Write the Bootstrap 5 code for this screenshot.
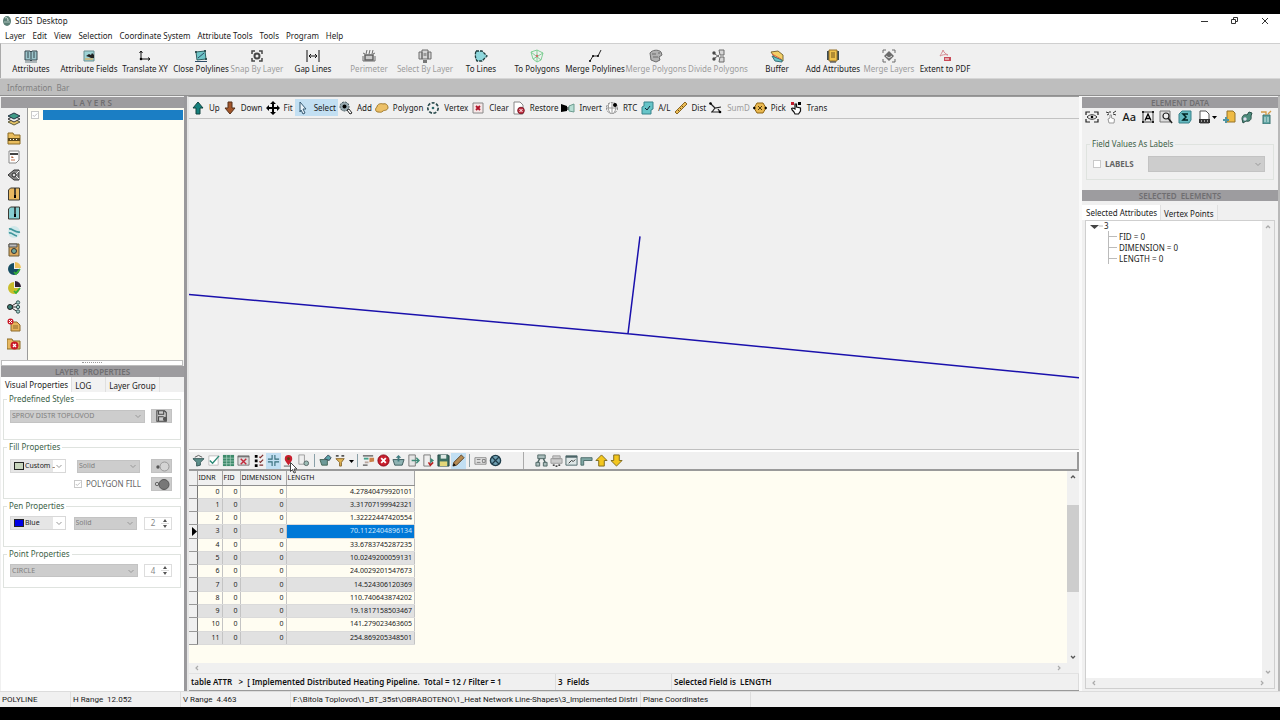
<!DOCTYPE html>
<html lang="en">
<head>
<meta charset="utf-8">
<meta name="viewport" content="width=device-width, initial-scale=1">
<title>SGIS Desktop</title>
<link href="https://cdn.jsdelivr.net/npm/bootstrap@5.3.0/dist/css/bootstrap.min.css" rel="stylesheet">
<style>
:root{--face:#f0f0f0;--cream:#fffdf2;--bar:#9d9c9f;--green:#3c5f47}
body{font:8px/10px "Noto Sans","Open Sans",sans-serif;color:#1b1b1b;background:var(--face);min-height:100vh}
svg{display:block;flex:none}
.ic{width:14px;height:14px}
button,select,input{font:inherit;color:inherit}
.letterbox{background:#000;height:14px}
.letterbox.foot{height:13px}
.titlebar{height:14px;background:#fff}
.titlebar button{width:30px;border:0;background:none;padding:0}
.titlebar span{white-space:pre;padding-left:2px}
.menubar{height:15px;background:#fff;padding-left:5px;gap:7px}
.menubar a{color:inherit;text-decoration:none}
.tool{border:0;background:none;padding:0;color:inherit}
.tool:disabled{color:#9c9c9c}
.ribbon{height:35px;border-top:1px solid #cfcfcf;border-left:1px solid #aaa;padding-top:5px}
.ribbon .tool{width:56px;display:flex;flex-direction:column;align-items:center;gap:1px;white-space:nowrap}
.ribbon .w-wide{width:60px}
.ribbon .w-xwide{width:62px}
.ribbon .tool:disabled svg{filter:grayscale(1);opacity:.7}
.infobar{height:18px;background:#bebebe;border-top:1px solid #d6d6d6;border-bottom:1px solid #909090;color:#808080;padding:4px 7px 0;white-space:pre}
.leftcol{width:187px;border-right:3px solid #9a999c;padding:1px 0 0 1px}
.rightcol{width:201px;border-left:3px solid #fafafa;border-right:2px solid #b9b9b9;padding-top:1px}
.caption{background:var(--bar);color:#6f6e71;height:11px;line-height:11px;text-align:center;font-weight:600;white-space:pre}
.strip{width:27px;border-right:1px solid #9a9a9a;padding:4px 0 9px;height:252px}
.treebox{background:var(--cream)}
.layer-row{height:13px;padding:1px 1px 1px 3px}
.layer-row .pick{height:10px;background:#1b7ec4}
.chk{appearance:none;width:8px;height:8px;margin:0;border:1px solid #c9c9c9;background:#fff}
.chk:checked{background:#fff url("data:image/svg+xml,%3Csvg xmlns='http://www.w3.org/2000/svg' viewBox='0 0 8 8'%3E%3Cpath d='M1 4l2 2 4-4' fill='none' stroke='%23aaa'/%3E%3C/svg%3E")}
.grip{height:6px;background:#fff;border:1px solid #bdbdbd;margin-right:1px}
.grip i{width:20px;height:2px;border-top:1px dotted #999;display:block}
.tabrow{height:15px}
.tabrow .tab{border:0;background:#f2f2f2;border-right:1px solid #e0e0e0;padding:2px 3px 0;line-height:11px}
.tabrow .tab.active{background:#fff;padding:0 3px 0 4px}
.tabrow .tab.roomy{padding-right:14px}
.props{background:#fff;padding:2px 3px 0 2px}
.grp{border:1px solid #dfe3df;margin:0 0 2px;padding:0 8px 0 6px;min-width:0}
.grp legend{float:none;width:auto;font-size:8px;line-height:10px;margin:0 0 0 -3px;padding:0 2px;color:var(--green)}
.r-ctl{padding-top:5px}
.r-low{padding-top:7px}
.polyfill{color:#666;padding-left:64px}
.sel{appearance:none;border:1px solid #c3c3c3;background:#cdcdcd url("data:image/svg+xml,%3Csvg xmlns='http://www.w3.org/2000/svg' viewBox='0 0 8 8'%3E%3Cpath d='M1.5 3l2.500 2.500L6.500 3' fill='none' stroke='%23999'/%3E%3C/svg%3E") no-repeat right 2px center/8px 8px;height:13px;padding:0 10px 0 1px;line-height:10px;font-size:7px;color:#808080;opacity:1;border-radius:0}
.sel.live{background-color:transparent;border:0;color:#222;font-size:7px;flex:1;min-width:0}
.swbox{width:56px;border:1px solid #d8d8d8;height:14px;background:linear-gradient(90deg,#e6e6e6 42px,#fff 42px);padding-left:3px}
.sw{width:10px;height:8px;border:1px solid #222}
.w63{width:63px}.w128{width:128px}.w134{width:135px}
.labelsel{width:117px;height:16px}
.sqbtn{width:21px;height:14px;background:#ccc;border:1px solid #c2c2c2;padding:0;display:flex;align-items:center;justify-content:center}
.spin{width:28px;height:13px;border:1px solid #ddd;background:#fff}
.spin input{width:16px;border:0;text-align:center;padding:0;background:none;color:#888}
.center-col{min-width:0;border-top:1px solid #9a9a9a;border-left:2px solid #e6e6e6}
.cmdbar{height:22px;border-bottom:1px solid #c2c2c2;padding:2px 0 2px 1px}
.cmdbar .tool{display:flex;align-items:center;gap:4px;padding:0 2px 0 1px;white-space:nowrap;height:17px}
.cmdbar .on,.gridbar .on{background:#c2dff2}
.map{flex:1;min-height:0}
.gridbar{height:21px;border-top:2px solid #fff;border-bottom:2px solid #9a9a9a;padding-left:2px;box-shadow:0 -1px #c0c0c0,inset -2px 0 #9a9a9a}
.gridbar .tool{width:15px;height:16px;display:flex;align-items:center;justify-content:center}
.gridbar .ic{width:13px;height:13px}
.vr1{width:1px;height:13px;background:#8aa0a8;margin:0 3px}
.vr1.far{margin:0 10px 0 20px;height:17px;background:#aaa}
.gridwrap{background:var(--cream);height:192px}
.attrs{width:226px;height:174px;border-collapse:collapse;font-size:7px;line-height:8px;table-layout:fixed}
.attrs th,.attrs td{padding:0 2px;border-right:1px solid #c4c4c4;border-bottom:1px solid #dadada;text-align:right;white-space:nowrap}
.attrs thead th{height:14px;background:var(--face);text-align:left;border-bottom:1px solid #8f8f8f;border-right-color:#a5a5a5;font-weight:400;color:#111;padding:0 1px}
.attrs tbody tr{height:13px}
.attrs tbody th{background:var(--face);border-bottom-color:#999;border-right-color:#777;padding:0}
.attrs tbody tr:nth-child(even) td{background:#e1e1e1}
.attrs tbody tr td.cur{background:#0078d7;color:#cfe8ff}
.vbar{width:12px;background:var(--face);color:#555}
.thumb{height:87px;background:#cdcdcd;margin-top:22px}
.hbar{height:10px;color:#aaa}
.gstat{height:18px;border-top:1px solid #e2e2e2;border-bottom:1px solid #9a9a9a;font-weight:600;white-space:pre;line-height:16px;color:#111}
.gstat span{border-right:1px solid #dcdcdc;padding-left:2px}
.c-total{flex:0 0 367px}.c-fields{flex:0 0 116px}
.statusbar{height:16px;border-top:1px solid #dcdcdc;white-space:pre;line-height:15px;font-family:Roboto,"Noto Sans",sans-serif}
.statusbar span{border-right:1px solid #ddd;padding-left:2px;flex:0 0 110px}
.statusbar .s-first{flex-basis:71px}.statusbar .s-path{flex-basis:350px}
.iconrow{padding:2px 5px 0 3px}
.aa{font-size:11px;line-height:12px;font-weight:500}
.labelgrp{height:41px;margin:15px 4px 2px}
.tree{background:#fff;border:1px solid #cfcfcf;margin:0 3px 2px}
.tree ul{list-style:none;margin:0 0 0 22px;padding:0;border-left:1px solid #bbb}
.tree li{height:11px;line-height:11px;padding-left:10px;background:linear-gradient(#bbb,#bbb) 0 5px/8px 1px no-repeat}
.cursor{position:absolute;left:101px;top:10px}
</style>
</head>
<body class="d-flex flex-column">
<svg width="0" height="0" class="position-absolute" aria-hidden="true">
<defs>
<symbol id="book" viewBox="0 0 14 14"><path d="M1 2h5l1 1 1-1h5v9H8l-1 1-1-1H1z" fill="#9cc5cb" stroke="#37474f"/><path d="M7 3v8M3 4h2M3 6h2M3 8h2M9 4h2M9 6h2M9 8h2" stroke="#37474f"/><path d="M1 13h12" stroke="#6b7d82"/></symbol>
<symbol id="fields" viewBox="0 0 14 14"><path d="M2 2h10v10H2z" fill="#9ed3d6" stroke="#6a8f90"/><path d="M4 7l3-2 2 1 1-2 2 2v3H9L7 8z" fill="#222"/><path d="M3 10h8" stroke="#e8a33d"/></symbol>
<symbol id="axes" viewBox="0 0 14 14"><path d="M3 2v8h9M1.500 4L3 2l1.500 2M10 8.500l2 1.500-2 1.500" fill="none" stroke="#111"/><circle cx="3" cy="10" r="1.300"/></symbol>
<symbol id="poly" viewBox="0 0 14 14"><path d="M2 3l9-1 1 8-9 1z" fill="#6fc6c8" stroke="#2f5f60"/><path d="M4 9l6-5M1 12.500h12" stroke="#2b4a66"/><path d="M1 2h2v2H1zM10 1h2v2h-2zM11 9h2v2h-2z" fill="#355"/></symbol>
<symbol id="snap" viewBox="0 0 14 14"><path d="M2 5V2h3M9 2h3v3M12 9v3H9M5 12H2V9" fill="none" stroke="#000" stroke-width="1.500"/><circle cx="7" cy="7" r="2.500" fill="none" stroke="#000" stroke-width="2"/></symbol>
<symbol id="gap" viewBox="0 0 14 14"><path d="M1 1v12M13 1v12M3 7h8M5 5L3 7l2 2M9 5l2 2-2 2" fill="none" stroke="#111"/></symbol>
<symbol id="perim" viewBox="0 0 14 14"><path d="M3 6h8v5H3z" fill="#bbb" stroke="#222" stroke-width="1.500"/><path d="M4 5l1-4M7 5l1-4M10 5l1-4M1 4l2 1M13 4l-2 1M1 7v5h12V7" stroke="#333" fill="none"/></symbol>
<symbol id="selby" viewBox="0 0 14 14"><path d="M4 1h6v9H4zM1 3h3v7H1zM10 3h3v7h-3z" fill="#ccc" stroke="#333"/><path d="M5 11h4v3H5z" fill="#444"/><path d="M5.500 4h3v3h-3z" fill="#777"/></symbol>
<symbol id="tolines" viewBox="0 0 14 14"><path d="M2 2h6l5 5-5 5H3C1 9 1 5 2 2z" fill="#8ed7dc" stroke="#1d3b3c" stroke-width="1.300" stroke-dasharray="3 1"/></symbol>
<symbol id="topoly" viewBox="0 0 14 14"><path d="M1 3l6-2 6 3-2 7-4 2-4-3zM7 1v12M1 3l10 8M13 4L3 10" fill="none" stroke="#7fcf94"/><circle cx="7" cy="7" r="1.200" fill="#d06a6a"/></symbol>
<symbol id="mline" viewBox="0 0 14 14"><path d="M2 12l3-5 5 0 3-6" fill="none" stroke="#222"/><circle cx="2" cy="12" r="1"/><circle cx="5" cy="7" r="1"/><circle cx="10" cy="7" r="1"/></symbol>
<symbol id="mpoly" viewBox="0 0 14 14"><path d="M1 4c2-3 8-4 11-1l1 3-3 2 1 3-4 2-5-2z" fill="#999" stroke="#333"/><path d="M3 5h4M4 8h5M9 4h2" stroke="#333"/></symbol>
<symbol id="divide" viewBox="0 0 14 14"><circle cx="3" cy="4" r="1.700"/><circle cx="3" cy="10" r="1.700"/><path d="M4 5l4 3M4 9l4-3" stroke="#222"/><path d="M8 1h5v5H9zM9 8h4v5H8z" fill="#ccc" stroke="#333"/></symbol>
<symbol id="buffer" viewBox="0 0 14 14"><path d="M1 3l7-1 5 4v6l-8-3z" fill="#f3cf66" stroke="#7c6a35"/><path d="M2 7l10 4v2L5 12z" fill="#6cc5c8" stroke="#37717a"/><path d="M2 5l9 5" stroke="#e0604a"/></symbol>
<symbol id="addattr" viewBox="0 0 14 14"><path d="M1 2h12v9H1z" fill="#3b4c54"/><path d="M3 1h8v11H3z" fill="#f0c34d" stroke="#96732a"/><path d="M5 4h4M5 6h4M5 8h4" stroke="#70541a"/><path d="M4 13h6" stroke="#222"/></symbol>
<symbol id="mlayer" viewBox="0 0 14 14"><path d="M1 4V1h3M10 1h3v3M13 10v3h-3M4 13H1v-3" fill="none" stroke="#333"/><path d="M7 2l5 5-5 5-5-5z" fill="#333"/><path d="M4 7l3 2 3-2" fill="none" stroke="#ddd"/></symbol>
<symbol id="pdf" viewBox="0 0 14 14"><path d="M5 1c-1 3-2 4-3 6M5 1c1 3 3 4 5 5-3-1-6 0-8 1" fill="none" stroke="#d58a92"/><path d="M6 8h7v4H6z" fill="#c94a58"/><path d="M8 9v2M10 9v2" stroke="#fff"/></symbol>
<symbol id="up" viewBox="0 0 14 14"><path d="M7 1l5 6H9v6H5V7H2z" fill="#15807c" stroke="#124440"/></symbol>
<symbol id="down" viewBox="0 0 14 14"><path d="M7 13l5-6H9V1H5v6H2z" fill="#a4572b" stroke="#54301a"/></symbol>
<symbol id="fit" viewBox="0 0 14 14"><path d="M7 0l3 3H8v3h3V4l3 3-3 3V8H8v3h2l-3 3-3-3h2V8H3v2L0 7l3-3v2h3V3H4z"/></symbol>
<symbol id="arrow" viewBox="0 0 14 14"><path d="M4 1l6 7H7l2 4-2 1-2-4-1 2z" fill="#eaf4fb" stroke="#375a72"/></symbol>
<symbol id="addp" viewBox="0 0 14 14"><circle cx="5.500" cy="5.500" r="4.500" fill="#97a9af" stroke="#44565c" stroke-dasharray="2 1"/><circle cx="5.500" cy="5.500" r="2"/><path d="M8 9l2-1 3 4-2 1z" fill="#fff" stroke="#222"/></symbol>
<symbol id="cloud" viewBox="0 0 14 14"><path d="M3 11C0 11 0 7 2 6c0-3 4-4 6-3 3-1 5 1 5 4-1 3-4 2-5 3-2 2-3 1-5 1z" fill="#ecc067" stroke="#a17a2c"/></symbol>
<symbol id="vertex" viewBox="0 0 14 14"><circle cx="7" cy="7" r="5.200" fill="none" stroke="#2d4d4f" stroke-width="1.700" stroke-dasharray="3 1.500"/><circle cx="7" cy="7" r="1.300" fill="#2d6a6c"/></symbol>
<symbol id="clear" viewBox="0 0 14 14"><path d="M2 2h10v10H2z" fill="#f6e7e7" stroke="#888"/><path d="M5 5l4 4M9 5l-4 4" stroke="#b01228" stroke-width="1.800"/></symbol>
<symbol id="restore" viewBox="0 0 14 14"><path d="M2 1h6l3 3v9H2z" fill="#fff" stroke="#888"/><circle cx="9" cy="9.500" r="3.300" fill="#c22f42" stroke="#7d1d29"/><path d="M7.500 8l3 3M10.500 8l-3 3" stroke="#fff"/></symbol>
<symbol id="invert" viewBox="0 0 14 14"><path d="M0 3l6 2v5l-6 1z"/><path d="M6 6h2v3H6z" fill="#666"/><path d="M8 5l5-2v8l-5-1z" fill="#b8ded4" stroke="#6b9b8f"/></symbol>
<symbol id="globe" viewBox="0 0 14 14"><circle cx="7" cy="7" r="5.500" fill="#fff" stroke="#777" stroke-dasharray="2 1"/><path d="M7 1v12M1 7h12M4 2c-1 4-1 7 1 10M10 2c1 4 1 7-1 10" fill="none" stroke="#999"/><circle cx="10" cy="4" r="2"/></symbol>
<symbol id="al" viewBox="0 0 14 14"><path d="M4 1h9v7l-2 1v4H2V6l2-1z" fill="#66c4c8" stroke="#37828a"/><path d="M5 7l2 2 3-4" fill="none" stroke="#123"/></symbol>
<symbol id="ruler" viewBox="0 0 14 14"><path d="M1 11L11 1l2 2L3 13z" fill="#e9bb55" stroke="#8a6725"/><path d="M4 9l1 1M6 7l1 1M8 5l1 1" stroke="#6b4e17"/></symbol>
<symbol id="sumd" viewBox="0 0 14 14"><path d="M1 2l5 5 6-1M2 11h9l-2-3M6 7l-3 4" fill="none" stroke="#222" stroke-width="1.200"/><circle cx="1.500" cy="2.500" r="1.300"/><circle cx="11" cy="11" r="1.300"/></symbol>
<symbol id="pickp" viewBox="0 0 14 14"><path d="M4 2h6l3 5-3 5H4L1 7z" fill="#eab84f" stroke="#8d6415"/><path d="M5 5l4 4M9 5L5 9" stroke="#513a0c"/><circle cx="1.300" cy="7" r="1.200"/><circle cx="12.700" cy="7" r="1.200"/></symbol>
<symbol id="trans" viewBox="0 0 14 14"><path d="M5 11C2 8 2 7 4 7l2 1V3h1.500v3l4 1v3l-2 3H6z" fill="#fff" stroke="#111" stroke-width="1.200"/><path d="M2 1h3v3H2z" fill="#c21a2b"/><path d="M9 1h3v3H9z"/></symbol>
<symbol id="layers" viewBox="0 0 14 14"><path d="M1 10l6-3 6 3-6 3z" fill="#e7c567" stroke="#5c5b3c"/><path d="M1 7l6-3 6 3-6 3z" fill="#eee" stroke="#333"/><path d="M1 4l6-3 6 3-6 3z" fill="#3f9a86" stroke="#234"/></symbol>
<symbol id="folder" viewBox="0 0 14 14"><path d="M1 2h5l1 2h6v9H1z" fill="#e9bd5e" stroke="#8a6a25"/><path d="M1 7h12v3H1z" fill="#5d4a1c"/><path d="M3 8.500h1M6 8.500h1M9 8.500h1" stroke="#fff"/></symbol>
<symbol id="dxf" viewBox="0 0 14 14"><path d="M2 1h10v9l-3 3H2z" fill="#fff" stroke="#888"/><path d="M3 3h8v2H3z" fill="#444"/><path d="M4 7h2v1M4 10h4" stroke="#c57048"/></symbol>
<symbol id="share" viewBox="0 0 14 14"><path d="M1 7l6-5h5v10H7z" fill="#888" stroke="#333"/><circle cx="7" cy="7" r="2" fill="#ddd" stroke="#222"/><path d="M9 6l3-3M9 8l3 3" stroke="#eee"/></symbol>
<symbol id="zip" viewBox="0 0 14 14"><path d="M1.500 3l2-2h9v12h-11z" fill="var(--f,#e8b860)" stroke="#3d3b33"/><path d="M8 1v7" stroke="#222" stroke-width="1.500"/><path d="M7 8h2v3H7z"/></symbol>
<symbol id="swirl" viewBox="0 0 14 14"><circle cx="7" cy="7" r="6" fill="#cfe8ea"/><path d="M2 4c3-1 6 4 11 3M2 8c3-1 5 3 8 3" fill="none" stroke="#3f959b" stroke-width="1.700"/></symbol>
<symbol id="docpin" viewBox="0 0 14 14"><path d="M2 1h10v12H2z" fill="#dba85a" stroke="#6b5a38"/><path d="M2 1h8v3H2z" fill="#bbb" stroke="#555"/><circle cx="7" cy="8" r="2.500" fill="#6fa79c" stroke="#333"/></symbol>
<symbol id="pie" viewBox="0 0 14 14"><path d="M7 1a6 6 0 1 0 6 6H7z" fill="var(--f,#174e63)"/><path d="M8 0a6 6 0 0 1 6 6H8z" fill="var(--g,#eec25e)"/><path d="M7 10l2 2 4-5" fill="none" stroke="#36b336" stroke-width="1.700"/></symbol>
<symbol id="nodes" viewBox="0 0 14 14"><path d="M3 7l8-5M3 7h8M3 7l8 5" stroke="#333"/><circle cx="3" cy="7" r="2.500" fill="#3a7f76" stroke="#222"/><g fill="#a5cfca" stroke="#355"><circle cx="11" cy="2.500" r="1.700"/><circle cx="11" cy="7" r="1.700"/><circle cx="11" cy="11.500" r="1.700"/></g></symbol>
<symbol id="docx" viewBox="0 0 14 14"><path d="M4 4h6l3 3v6H4z" fill="#e6b35a" stroke="#8d6b2d"/><path d="M6 8h5M6 10h5" stroke="#8d6b2d"/><circle cx="3.500" cy="3.500" r="3" fill="#c91a28"/><path d="M2 2l3 3M5 2L2 5" stroke="#fff"/></symbol>
<symbol id="foldx" viewBox="0 0 14 14"><path d="M0 2h5l1 2h7v8H0z" fill="#e8b860" stroke="#8a6a25"/><circle cx="7.500" cy="8.500" r="4" fill="#c91a28"/><path d="M6 7l3 3M9 7l-3 3" stroke="#fff" stroke-width="1.300"/></symbol>
<symbol id="funnel" viewBox="0 0 14 14"><path d="M1 5h12L9 9v3l-4 1V9z" fill="#5c8f8a" stroke="#355"/><path d="M3 3.500l4-2 4 2" fill="none" stroke="#555"/></symbol>
<symbol id="check" viewBox="0 0 14 14"><path d="M2 2h10v10H2z" fill="#fff" stroke="#bbb"/><path d="M3 7l3 3 7-8" fill="none" stroke="#2b8a76" stroke-width="1.500"/></symbol>
<symbol id="grid" viewBox="0 0 14 14"><path d="M1 1h12v12H1z" fill="#3d8a6a"/><path d="M1 4.500h12M1 7.500h12M1 10.500h12M5 1v12M9 1v12" stroke="#b5d8c9" stroke-width=".7"/></symbol>
<symbol id="tblx" viewBox="0 0 14 14"><path d="M1 2h12v10H1z" fill="#ddd" stroke="#777"/><path d="M1 3h12" stroke="#555"/><path d="M4 5l6 6M10 5l-6 6" stroke="#c2293a" stroke-width="1.500"/></symbol>
<symbol id="list" viewBox="0 0 14 14"><path d="M3 1h3v3H3zM3 6h3v3H3zM3 11h3v3H3z"/><path d="M8 3l1 1 3-3M8 8l1 1 3-3M8 12h4" fill="none" stroke="#7b2c2c" stroke-width="1.300"/></symbol>
<symbol id="cross" viewBox="0 0 14 14"><path d="M5.500 1v4.500H1M8.500 1v4.500H13M5.500 13V8.500H1M8.500 13V8.500H13" fill="none" stroke="#356e7a" stroke-width="1.200"/></symbol>
<symbol id="pin" viewBox="0 0 14 14"><path d="M7 12C4 8 3 7 3 5a4 4 0 0 1 8 0c0 2-1 3-4 7z" fill="#c81e2d"/><circle cx="7" cy="5" r="1.500" fill="#541"/><path d="M2 13h10" stroke="#555"/></symbol>
<symbol id="docg" viewBox="0 0 14 14"><path d="M2 1h6v10H2z" fill="#eee" stroke="#999"/><circle cx="10" cy="10" r="2.500" fill="#9dbdb5" stroke="#566"/></symbol>
<symbol id="export" viewBox="0 0 14 14"><path d="M1 6h8v6H3z" fill="#6e9a98" stroke="#465"/><path d="M6 5l4-4 3 3-2 3z" fill="#5aa3a8" stroke="#345"/></symbol>
<symbol id="filt2" viewBox="0 0 14 14"><path d="M2 5h9L8 9v4H6V9z" fill="#e2b553" stroke="#87652a"/><path d="M2 1h3v2H2zM8 1h3v2H8z" fill="#555"/></symbol>
<symbol id="edit2" viewBox="0 0 14 14"><path d="M1 2h11M1 12h5" stroke="#555" stroke-width="1.300"/><path d="M8 4h5v4L8 9z" fill="#c9824a"/><path d="M2 4h5v2H2z" fill="#44a089"/><path d="M3 8h4v2H3z" fill="#b9a7a0"/></symbol>
<symbol id="redx" viewBox="0 0 14 14"><circle cx="7" cy="7" r="6" fill="#c81e2d" stroke="#801"/><path d="M4.500 4.500l5 5M9.500 4.500l-5 5" stroke="#fff" stroke-width="2"/></symbol>
<symbol id="upl" viewBox="0 0 14 14"><path d="M1 6h12l-2 6H3z" fill="#8fb3b3" stroke="#3b5b5d"/><path d="M7 1l3 3H8v4H6V4H4z" fill="#3f7c80"/></symbol>
<symbol id="docout" viewBox="0 0 14 14"><path d="M2 1h7v12H2z" fill="#e5e5e5" stroke="#777"/><path d="M5 7h7M10 4l3 3-3 3" fill="none" stroke="#3f8a78" stroke-width="1.500"/></symbol>
<symbol id="docred" viewBox="0 0 14 14"><path d="M2 1h7v12H2z" fill="#eee" stroke="#777"/><path d="M9 4l4 3-4 3z" fill="#3f8a78"/><path d="M7 9l2 3 3-3" fill="none" stroke="#b22" stroke-width="1.700"/></symbol>
<symbol id="save" viewBox="0 0 14 14"><path d="M1 1h11l1 1v11H1z" fill="#3c6f63" stroke="#244"/><path d="M4 1h6v4H4z" fill="#dfe8e4"/><path d="M3 8h8v5H3z" fill="#e3d77a"/></symbol>
<symbol id="pencil" viewBox="0 0 14 14"><path d="M1 13l1-4 8-8 3 3-8 8z" fill="#b58a52" stroke="#55432b"/><path d="M1 13l1-3 2 2z"/></symbol>
<symbol id="kbd" viewBox="0 0 14 14"><path d="M1 4h12v7H1z" fill="#e5e5e5" stroke="#888"/><path d="M3 6h4M3 9h4M9 6v3h3V6z" stroke="#777" fill="none"/></symbol>
<symbol id="circx" viewBox="0 0 14 14"><circle cx="7" cy="7" r="5.500" fill="#6f9fb2" stroke="#1f3d4a" stroke-width="1.500"/><path d="M3 3l8 8M11 3l-8 8" stroke="#1f3d4a" stroke-width="1.300"/></symbol>
<symbol id="net" viewBox="0 0 14 14"><path d="M3 1h8v4H3zM1 9h4v4H1zM9 9h4v4H9z" fill="#a9bcbb" stroke="#4e6664"/><path d="M5 5l-2 4M9 5l2 4" stroke="#4e6664" stroke-width="1.500"/></symbol>
<symbol id="print" viewBox="0 0 14 14"><path d="M3 2h8v3H3zM1 5h12v5H1z" fill="#ccc" stroke="#999"/><path d="M3 12h2M6 13h2M9 12h2" stroke="#111" stroke-width="1.500"/></symbol>
<symbol id="win" viewBox="0 0 14 14"><path d="M1 2h12v10H1z" fill="#dfe7e7" stroke="#4b6467"/><path d="M1 3h12" stroke="#4b6467" stroke-width="2"/><path d="M4 10l3-3 2 1 2-2" fill="none" stroke="#333"/></symbol>
<symbol id="tee" viewBox="0 0 14 14"><path d="M1 4h12v3H4v5H1z" fill="#7fa7a4" stroke="#4b6b69"/></symbol>
<symbol id="yup" viewBox="0 0 14 14"><path d="M7 1l6 6h-3v6H4V7H1z" fill="#f3c61d" stroke="#7b671a"/></symbol>
<symbol id="ydown" viewBox="0 0 14 14"><path d="M7 13l6-6h-3V1H4v6H1z" fill="#f3c61d" stroke="#7b671a"/></symbol>
<symbol id="eye" viewBox="0 0 14 14"><path d="M1 5V2h4M9 2h4v3M13 9v3H9M5 12H1V9" fill="none" stroke="#222" stroke-width="1.200"/><path d="M2 7c3-3 7-3 10 0-3 3-7 3-10 0z" fill="none" stroke="#333"/><circle cx="7" cy="7" r="1.300"/></symbol>
<symbol id="hand" viewBox="0 0 14 14"><path d="M5 13l-1-4 2-1V5h1.500v3l3 1-.5 4z" fill="#fff" stroke="#999"/><path d="M2 2l3 1M6 1v2M12 1l-3 2M3 5l2-1M9 4l3 1" stroke="#333"/></symbol>
<symbol id="boxa" viewBox="0 0 14 14"><path d="M2 2h10v10H2z" fill="none" stroke="#444"/><path d="M1 1h2v2H1zM11 1h2v2h-2zM1 11h2v2H1zM11 11h2v2h-2z" fill="#222"/><path d="M4 10.500L7 4l3 6.500M5 8.500h4" fill="none" stroke="#000" stroke-width="1.300"/></symbol>
<symbol id="find" viewBox="0 0 14 14"><path d="M1 1h10v11H1z" fill="#ddd" stroke="#777"/><circle cx="7" cy="6" r="3" fill="#eee" stroke="#222" stroke-width="1.200"/><path d="M9 8l4 5" stroke="#222" stroke-width="1.700"/></symbol>
<symbol id="sigma" viewBox="0 0 14 14"><path d="M4 1h9v9l-2 3H1V4z" fill="#65b9c0" stroke="#39818a"/><path d="M10 4H5l3 3-3 3h5" fill="none" stroke="#022" stroke-width="1.500"/></symbol>
<symbol id="csv" viewBox="0 0 14 14"><path d="M3 1h6l3 3v9H3z" fill="#fff" stroke="#555"/><path d="M2 9h11v4H2z" fill="#333"/><path d="M4 11h1M7 11h1M10 11h1" stroke="#fff"/></symbol>
<symbol id="ydoc" viewBox="0 0 14 14"><path d="M5 1h6l2 2v9H5z" fill="#efbb45" stroke="#93722a"/><path d="M4 7v6M1 10h6" stroke="#5095a3" stroke-width="2"/></symbol>
<symbol id="plug" viewBox="0 0 14 14"><path d="M2 9c0-4 3-5 5-4l2-3 3 1-1 3c1 4-2 6-5 5l-3 2z" fill="#4e8d7d" stroke="#284f48"/><circle cx="5" cy="9" r="1.700" fill="#dde"/></symbol>
<symbol id="trash" viewBox="0 0 14 14"><path d="M4 5h7v9H4z" fill="#61a6a5" stroke="#39706f"/><path d="M2 2h5v3M9 4l3-3" fill="none" stroke="#d29a46" stroke-width="1.300"/><path d="M6 7v5M9 7v5" stroke="#cfe5e3"/></symbol>
<symbol id="cl" viewBox="0 0 8 8"><path d="M5 2L3 4l2 2" fill="none" stroke="currentColor" stroke-width="1.200"/></symbol>
<symbol id="cr" viewBox="0 0 8 8"><path d="M3 2l2 2-2 2" fill="none" stroke="currentColor" stroke-width="1.200"/></symbol>
<symbol id="cu" viewBox="0 0 8 8"><path d="M2 5l2-2 2 2" fill="none" stroke="currentColor" stroke-width="1.300"/></symbol>
<symbol id="cd" viewBox="0 0 8 8"><path d="M2 3l2 2 2-2" fill="none" stroke="currentColor" stroke-width="1.300"/></symbol>
<symbol id="ud" viewBox="0 0 8 11"><path d="M4 1l2 3H2zM4 10l2-3H2z" fill="#555"/><path d="M0 5.500h8" stroke="#ddd"/></symbol>
<symbol id="dd" viewBox="0 0 6 6"><path d="M1 2h5L3.500 5z"/></symbol>
</defs></svg>

<div class="letterbox"></div>
<header>
<div class="titlebar d-flex align-items-center">
<svg width="13" height="10" viewBox="0 0 13 10"><ellipse cx="7" cy="5" rx="4" ry="5" fill="#5c7f76"/><path d="M5 2c2-1 3 0 3 3" stroke="#dfeae6" fill="none"/><path d="M4 6h6" stroke="#a9c3bb"/></svg>
<span>SGIS  Desktop</span>
<div class="ms-auto d-flex">
<button aria-label="Minimize"><svg width="8" height="8" class="mx-auto"><path d="M0 4.500h7" stroke="#333"/></svg></button>
<button aria-label="Restore"><svg width="8" height="8" class="mx-auto"><path d="M.5 2.500h4v4h-4zM2.500 2V.5h4v4H5" fill="none" stroke="#333"/></svg></button>
<button aria-label="Close"><svg width="8" height="8" class="mx-auto"><path d="M1 1l6 6M7 1L1 7" stroke="#333"/></svg></button>
</div></div>
<nav class="menubar d-flex align-items-center">
<a href="#">Layer</a><a href="#">Edit</a><a href="#">View</a><a href="#">Selection</a><a href="#">Coordinate System</a><a href="#">Attribute Tools</a><a href="#">Tools</a><a href="#">Program</a><a href="#">Help</a>
</nav>
<div class="ribbon d-flex">
<button class="tool w-wide"><svg class="ic"><use href="#book"/></svg>Attributes</button>
<button class="tool"><svg class="ic"><use href="#fields"/></svg>Attribute Fields</button>
<button class="tool"><svg class="ic"><use href="#axes"/></svg>Translate XY</button>
<button class="tool"><svg class="ic"><use href="#poly"/></svg>Close Polylines</button>
<button class="tool" disabled><svg class="ic"><use href="#snap"/></svg>Snap By Layer</button>
<button class="tool"><svg class="ic"><use href="#gap"/></svg>Gap Lines</button>
<button class="tool" disabled><svg class="ic"><use href="#perim"/></svg>Perimeter</button>
<button class="tool" disabled><svg class="ic"><use href="#selby"/></svg>Select By Layer</button>
<button class="tool"><svg class="ic"><use href="#tolines"/></svg>To Lines</button>
<button class="tool"><svg class="ic"><use href="#topoly"/></svg>To Polygons</button>
<button class="tool w-wide"><svg class="ic"><use href="#mline"/></svg>Merge Polylines</button>
<button class="tool w-xwide" disabled><svg class="ic"><use href="#mpoly"/></svg>Merge Polygons</button>
<button class="tool w-xwide" disabled><svg class="ic"><use href="#divide"/></svg>Divide Polygons</button>
<button class="tool"><svg class="ic"><use href="#buffer"/></svg>Buffer</button>
<button class="tool"><svg class="ic"><use href="#addattr"/></svg>Add Attributes</button>
<button class="tool" disabled><svg class="ic"><use href="#mlayer"/></svg>Merge Layers</button>
<button class="tool"><svg class="ic"><use href="#pdf"/></svg>Extent to PDF</button>
</div>
<div class="infobar">Information  Bar</div>
</header>

<main class="d-flex flex-grow-1">
<aside class="leftcol d-flex flex-column flex-shrink-0">
<div class="caption">L A Y E R S</div>
<div class="d-flex">
<div class="strip d-flex flex-column align-items-center justify-content-between">
<button class="tool" aria-label="Layers"><svg class="ic"><use href="#layers"/></svg></button>
<button class="tool" aria-label="Open folder"><svg class="ic"><use href="#folder"/></svg></button>
<button class="tool" aria-label="Import DXF"><svg class="ic"><use href="#dxf"/></svg></button>
<button class="tool" aria-label="Share"><svg class="ic"><use href="#share"/></svg></button>
<button class="tool" aria-label="Archive"><svg class="ic"><use href="#zip"/></svg></button>
<button class="tool" aria-label="Archive layer" style="--f:#86cdd0"><svg class="ic"><use href="#zip"/></svg></button>
<button class="tool" aria-label="Terrain"><svg class="ic"><use href="#swirl"/></svg></button>
<button class="tool" aria-label="Document"><svg class="ic"><use href="#docpin"/></svg></button>
<button class="tool" aria-label="Chart"><svg class="ic"><use href="#pie"/></svg></button>
<button class="tool" aria-label="Theme chart" style="--f:#c9bd2b;--g:#2e1f33"><svg class="ic"><use href="#pie"/></svg></button>
<button class="tool" aria-label="Nodes"><svg class="ic"><use href="#nodes"/></svg></button>
<button class="tool" aria-label="Remove layer"><svg class="ic"><use href="#docx"/></svg></button>
<button class="tool" aria-label="Remove all"><svg class="ic"><use href="#foldx"/></svg></button>
</div>
<div class="treebox flex-grow-1"><div class="layer-row d-flex align-items-center gap-1"><input class="chk" type="checkbox" checked disabled aria-label="Layer visible"><div class="pick flex-grow-1"></div></div></div>
</div>
<div class="grip d-flex align-items-center justify-content-center"><i></i></div>
<div class="caption">LAYER  PROPERTIES</div>
<div class="tabrow d-flex"><button class="tab active">Visual Properties</button><button class="tab roomy">LOG</button><button class="tab">Layer Group</button></div>
<div class="props flex-grow-1">
<fieldset class="grp" style="height:46px"><legend>Predefined Styles</legend>
<div class="r-ctl d-flex justify-content-between align-items-center"><select class="sel w134" disabled aria-label="Style"><option>SPROV DISTR TOPLOVOD</option></select><button class="sqbtn" aria-label="Save style"><svg width="12" height="12" viewBox="0 0 14 14"><path d="M1 1h9l2 2v10H1zM3 1v4h6V1M3 13V8h6" fill="none" stroke="#444" stroke-width="1.200"/><circle cx="10.500" cy="10.500" r="2.500" fill="#555"/></svg></button></div></fieldset>
<fieldset class="grp" style="height:57px"><legend>Fill Properties</legend>
<div class="r-low d-flex justify-content-between align-items-center"><div class="swbox d-flex align-items-center"><span class="sw" style="background:#c8d5bd"></span><select class="sel live" aria-label="Fill colour"><option>Custom ..</option></select></div><select class="sel w63" disabled aria-label="Fill style"><option>Solid</option></select><button class="sqbtn" aria-label="Less opaque"><svg width="16" height="11" viewBox="0 0 16 11"><circle cx="4" cy="6" r="1.700" fill="#555"/><circle cx="10.500" cy="5.500" r="4.500" fill="#d4d4d4" stroke="#999"/></svg></button></div>
<div class="d-flex align-items-center pt-1 justify-content-between"><label class="polyfill d-flex align-items-center gap-1"><input class="chk" type="checkbox" checked disabled>POLYGON FILL</label><button class="sqbtn" aria-label="More opaque"><svg width="16" height="11" viewBox="0 0 16 11"><circle cx="3" cy="5" r="1.700" fill="none" stroke="#666"/><circle cx="10" cy="5.500" r="5" fill="#777" stroke="#555"/></svg></button></div></fieldset>
<fieldset class="grp" style="height:46px"><legend>Pen Properties</legend>
<div class="r-ctl d-flex justify-content-between align-items-center"><div class="swbox d-flex align-items-center"><span class="sw" style="background:#0000e6"></span><select class="sel live" aria-label="Pen colour"><option>Blue</option></select></div><select class="sel w63" disabled aria-label="Pen style"><option>Solid</option></select><div class="spin d-flex"><input value="2" aria-label="Pen width"><svg width="8" height="11"><use href="#ud"/></svg></div></div></fieldset>
<fieldset class="grp" style="height:39px"><legend>Point Properties</legend>
<div class="r-ctl d-flex justify-content-between align-items-center"><select class="sel w128" disabled aria-label="Point shape"><option>CIRCLE</option></select><div class="spin d-flex"><input value="4" aria-label="Point size"><svg width="8" height="11"><use href="#ud"/></svg></div></div></fieldset>
</div>
</aside>

<section class="center-col d-flex flex-column flex-grow-1">
<div class="cmdbar d-flex align-items-center">
<button class="tool"><svg class="ic"><use href="#up"/></svg>Up</button>
<button class="tool"><svg class="ic"><use href="#down"/></svg>Down</button>
<button class="tool"><svg class="ic"><use href="#fit"/></svg>Fit</button>
<button class="tool on"><svg class="ic"><use href="#arrow"/></svg>Select</button>
<button class="tool"><svg class="ic"><use href="#addp"/></svg>Add</button>
<button class="tool"><svg class="ic"><use href="#cloud"/></svg>Polygon</button>
<button class="tool"><svg class="ic"><use href="#vertex"/></svg>Vertex</button>
<button class="tool"><svg class="ic"><use href="#clear"/></svg>Clear</button>
<button class="tool"><svg class="ic"><use href="#restore"/></svg>Restore</button>
<button class="tool"><svg class="ic"><use href="#invert"/></svg>Invert</button>
<button class="tool"><svg class="ic"><use href="#globe"/></svg>RTC</button>
<button class="tool"><svg class="ic"><use href="#al"/></svg>A/L</button>
<button class="tool"><svg class="ic"><use href="#ruler"/></svg>Dist</button>
<button class="tool" disabled><svg class="ic"><use href="#sumd"/></svg>SumD</button>
<button class="tool"><svg class="ic"><use href="#pickp"/></svg>Pick</button>
<button class="tool"><svg class="ic"><use href="#trans"/></svg>Trans</button>
</div>
<svg class="map w-100" viewBox="0 0 890 330" preserveAspectRatio="none"><path d="M0 175L439 214L890 258M439 214L451 117" fill="none" stroke="#1a10ac" stroke-width="1.500" vector-effect="non-scaling-stroke"/></svg>
<div class="gridbar d-flex align-items-center position-relative">
<button class="tool" aria-label="Filter"><svg class="ic"><use href="#funnel"/></svg></button>
<button class="tool" aria-label="Check"><svg class="ic"><use href="#check"/></svg></button>
<button class="tool" aria-label="Table"><svg class="ic"><use href="#grid"/></svg></button>
<button class="tool" aria-label="Clear table"><svg class="ic"><use href="#tblx"/></svg></button>
<button class="tool" aria-label="Choose fields"><svg class="ic"><use href="#list"/></svg></button>
<button class="tool on" aria-label="Centre"><svg class="ic"><use href="#cross"/></svg></button>
<button class="tool" aria-label="Locate"><svg class="ic"><use href="#pin"/></svg></button>
<button class="tool" aria-label="Record options"><svg class="ic"><use href="#docg"/></svg></button>
<span class="vr1"></span>
<button class="tool" aria-label="Export"><svg class="ic"><use href="#export"/></svg></button>
<button class="tool" aria-label="Filter menu"><svg class="ic"><use href="#filt2"/></svg></button>
<svg width="6" height="6"><use href="#dd"/></svg><span class="vr1"></span>
<button class="tool" aria-label="Edit fields"><svg class="ic"><use href="#edit2"/></svg></button>
<button class="tool" aria-label="Delete"><svg class="ic"><use href="#redx"/></svg></button>
<button class="tool" aria-label="Upload"><svg class="ic"><use href="#upl"/></svg></button>
<button class="tool" aria-label="Export rows"><svg class="ic"><use href="#docout"/></svg></button>
<button class="tool" aria-label="Import rows"><svg class="ic"><use href="#docred"/></svg></button>
<button class="tool" aria-label="Save"><svg class="ic"><use href="#save"/></svg></button>
<button class="tool on" aria-label="Edit"><svg class="ic"><use href="#pencil"/></svg></button>
<span class="vr1"></span>
<button class="tool" aria-label="Rename"><svg class="ic"><use href="#kbd"/></svg></button>
<button class="tool" aria-label="Cancel"><svg class="ic"><use href="#circx"/></svg></button>
<span class="vr1 far"></span>
<button class="tool" aria-label="Network"><svg class="ic"><use href="#net"/></svg></button>
<button class="tool" aria-label="Print"><svg class="ic"><use href="#print"/></svg></button>
<button class="tool" aria-label="Chart window"><svg class="ic"><use href="#win"/></svg></button>
<button class="tool" aria-label="Profile"><svg class="ic"><use href="#tee"/></svg></button>
<button class="tool" aria-label="Move up"><svg class="ic"><use href="#yup"/></svg></button>
<button class="tool" aria-label="Move down"><svg class="ic"><use href="#ydown"/></svg></button>
<svg class="cursor" width="8" height="12" viewBox="0 0 8 12"><path d="M.5.5v9l2-2 1.500 3.500 1.500-.5L4 7h3z" fill="#fff" stroke="#444"/></svg>
</div>
<div class="gridwrap d-flex">
<div class="flex-grow-1">
<table class="attrs"><colgroup><col style="width:8px"><col style="width:25px"><col style="width:18px"><col style="width:46px"><col></colgroup>
<thead><tr><th></th><th>IDNR</th><th>FID</th><th>DIMENSION</th><th>LENGTH</th></tr></thead>
<tbody>
<tr><th></th><td>0</td><td>0</td><td>0</td><td>4.27840479920101</td></tr>
<tr><th></th><td>1</td><td>0</td><td>0</td><td>3.31707199942321</td></tr>
<tr><th></th><td>2</td><td>0</td><td>0</td><td>1.32222447420554</td></tr>
<tr><th><svg width="6" height="9" viewBox="0 0 6 9" class="ms-auto"><path d="M1 0l5 4.500L1 9z"/></svg></th><td>3</td><td>0</td><td>0</td><td class="cur">70.1122404896134</td></tr>
<tr><th></th><td>4</td><td>0</td><td>0</td><td>33.6783745287235</td></tr>
<tr><th></th><td>5</td><td>0</td><td>0</td><td>10.0249200059131</td></tr>
<tr><th></th><td>6</td><td>0</td><td>0</td><td>24.0029201547673</td></tr>
<tr><th></th><td>7</td><td>0</td><td>0</td><td>14.524306120369</td></tr>
<tr><th></th><td>8</td><td>0</td><td>0</td><td>110.740643874202</td></tr>
<tr><th></th><td>9</td><td>0</td><td>0</td><td>19.1817158503467</td></tr>
<tr><th></th><td>10</td><td>0</td><td>0</td><td>141.279023463605</td></tr>
<tr><th></th><td>11</td><td>0</td><td>0</td><td>254.869205348501</td></tr>
</tbody></table></div>
<div class="vbar d-flex flex-column align-items-stretch"><svg width="8" height="12" class="mx-auto"><use href="#cu"/></svg><div class="thumb"></div><svg width="8" height="12" class="mt-auto mx-auto"><use href="#cd"/></svg></div>
</div>
<div class="hbar d-flex justify-content-between align-items-center ps-1 pe-3"><svg width="8" height="8"><use href="#cl"/></svg><svg width="8" height="8"><use href="#cr"/></svg></div>
<div class="gstat d-flex"><span class="c-total">table ATTR   &gt;  [ Implemented Distributed Heating Pipeline.  Total = 12 / Filter = 1</span><span class="c-fields">3  Fields</span><span class="flex-grow-1">Selected Field is  LENGTH</span></div>
</section>

<aside class="rightcol d-flex flex-column flex-shrink-0">
<div class="caption">ELEMENT DATA</div>
<div class="iconrow d-flex align-items-center justify-content-between">
<button class="tool" aria-label="View"><svg class="ic"><use href="#eye"/></svg></button>
<button class="tool" aria-label="Touch"><svg class="ic"><use href="#hand"/></svg></button>
<button class="tool aa">Aa</button>
<button class="tool" aria-label="Text frame"><svg class="ic"><use href="#boxa"/></svg></button>
<button class="tool" aria-label="Find"><svg class="ic"><use href="#find"/></svg></button>
<button class="tool" aria-label="Sum"><svg class="ic"><use href="#sigma"/></svg></button>
<button class="tool d-flex align-items-center" aria-label="Save as CSV"><svg class="ic"><use href="#csv"/></svg><svg width="6" height="6"><use href="#dd"/></svg></button>
<button class="tool" aria-label="Add document"><svg class="ic"><use href="#ydoc"/></svg></button>
<button class="tool" aria-label="Tools"><svg class="ic"><use href="#plug"/></svg></button>
<button class="tool" aria-label="Clear"><svg class="ic"><use href="#trash"/></svg></button>
</div>
<fieldset class="grp labelgrp"><legend>Field Values As Labels</legend>
<div class="r-low d-flex align-items-center justify-content-between"><label class="d-flex align-items-center gap-1 fw-bold" style="color:#666"><input class="chk" type="checkbox">LABELS</label><select class="sel labelsel" disabled aria-label="Label field"><option></option></select></div></fieldset>
<div class="caption mt-2">SELECTED  ELEMENTS</div>
<div class="tabrow d-flex mt-1"><button class="tab active">Selected Attributes</button><button class="tab">Vertex Points</button></div>
<div class="tree d-flex flex-column flex-grow-1">
<div class="d-flex flex-grow-1"><div class="flex-grow-1"><div class="d-flex align-items-center"><svg width="14" height="8" viewBox="0 0 14 8" class="ms-1"><path d="M0 3h9L4.500 7z" fill="#444"/><path d="M9 4h4" stroke="#bbb"/></svg>3</div>
<ul><li>FID = 0</li><li>DIMENSION = 0</li><li>LENGTH = 0</li></ul></div>
<div class="vbar d-flex flex-column" style="color:#aaa"><svg width="8" height="12" class="mx-auto"><use href="#cu"/></svg><svg width="8" height="12" class="mt-auto mx-auto"><use href="#cd"/></svg></div></div>
<div class="hbar d-flex justify-content-between align-items-center pe-2 ps-1" style="background:#f0f0f0"><svg width="8" height="8"><use href="#cl"/></svg><svg width="8" height="8"><use href="#cr"/></svg></div>
</div>
</aside>
</main>
<footer class="statusbar d-flex"><span class="s-first">POLYLINE</span><span>H Range  12.052</span><span>V Range  4.463</span><span class="s-path">F:\Bitola Toplovod\1_BT_35st\OBRABOTENO\1_Heat Network Line-Shapes\3_Implemented Distri</span><span>Plane Coordinates</span></footer>
<div class="letterbox foot"></div>
<script src="https://cdn.jsdelivr.net/npm/bootstrap@5.3.0/dist/js/bootstrap.bundle.min.js"></script>
</body>
</html>
